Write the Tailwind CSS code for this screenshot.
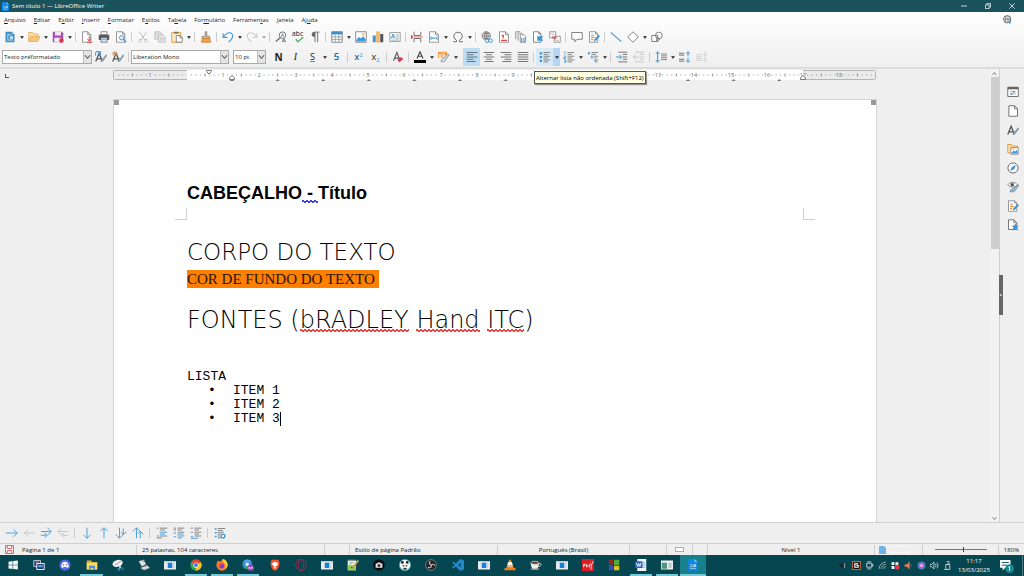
<!DOCTYPE html>
<html lang="pt-BR">
<head>
    <meta charset="UTF-8">
    <meta name="viewport" content="width=device-width, initial-scale=1.0">
    <title>Sem título 1 — LibreOffice Writer</title>
    <script src="https://cdn.jsdelivr.net/npm/@tailwindcss/browser@4"></script>
</head>
<body class="h-screen flex flex-col overflow-hidden bg-[#efefef] text-[#222] text-[6px] leading-[10px] font-['Segoe_UI','Open_Sans',sans-serif]">

    <!-- icon sprite -->
    <svg class="hidden">
        <defs>
            <!-- standard toolbar -->
            <symbol id="new" viewBox="0 0 16 16"><path d="M2 1h9l3 3v11H2z" fill="#3d8fc9"/><path d="M11 1v3h3z" fill="#bfe0f5"/><path d="M4 5h6M4 7.500h2M4 9.500h2M4 12h8" stroke="#fff"/><path d="M8 7h4v3.500H8z" fill="#cfe8f8"/></symbol>
            <symbol id="folder" viewBox="0 0 16 16"><path d="M1 14V2h5l1.500 2H13v3" fill="#fbe3b6" stroke="#e0a040"/><path d="M1 14 4 7h12l-3 7z" fill="#f7c77a" stroke="#e8a74b"/></symbol>
            <symbol id="save" viewBox="0 0 16 16"><path d="M1 1h12l2 2v12H1z" fill="#a04fb5"/><path d="M4 1h8v5H4zM3 9h9v6H3z" fill="#f3e3f7"/><circle cx="12.500" cy="12.500" r="3" fill="#e0364c"/></symbol>
            <symbol id="pdf" viewBox="0 0 16 16"><path d="M2 1h7l4 4v10H2z" fill="#fff" stroke="#777"/><path d="M9 1v4h4" fill="none" stroke="#777"/><path d="M11 7v6M8.500 10.500 11 13.500l2.500-3M8 15h7" fill="none" stroke="#e04545" stroke-width="1.300"/></symbol>
            <symbol id="print" viewBox="0 0 16 16"><path d="M4 1h8v4H4z" fill="#fff" stroke="#666"/><path d="M1 5h14v7H1z" fill="#5a5a5a"/><path d="M4 9h8v6H4z" fill="#d5eaf8" stroke="#666"/><path d="M6 11.500h4" stroke="#3d8fc9"/></symbol>
            <symbol id="preview" viewBox="0 0 16 16"><path d="M2 1h8l3 3v11H2z" fill="#fff" stroke="#777"/><path d="M10 1v3h3" fill="none" stroke="#777"/><circle cx="9" cy="9" r="3" fill="#e3f2fc" stroke="#3d95d6" stroke-width="1.300"/><path d="m11 11 4 4" stroke="#3d95d6" stroke-width="1.600"/></symbol>
            <symbol id="cut" viewBox="0 0 16 16"><path d="m3 1 7.500 11M13 1 5.500 12" stroke="#bbb" stroke-width="1.200" fill="none"/><circle cx="4" cy="13" r="2" fill="none" stroke="#bbb"/><circle cx="12" cy="13" r="2" fill="none" stroke="#bbb"/></symbol>
            <symbol id="copy" viewBox="0 0 16 16"><path d="M1 1h7l2 2v8H1z" fill="#ddd" stroke="#bbb"/><path d="M6 5h6l3 3v7H6z" fill="#e8e8e8" stroke="#b5b5b5"/><path d="M8 9.500h5M8 12h5" stroke="#bbb"/></symbol>
            <symbol id="paste" viewBox="0 0 16 16"><path d="M1 2h12v13H1z" fill="#fdebc8" stroke="#e0a040" stroke-width="1.300"/><path d="M4 1h6v2.500H4z" fill="#777"/><path d="M7 6h5l3 3v6H7z" fill="#fff" stroke="#666"/><path d="M12 6v3h3" fill="none" stroke="#666"/></symbol>
            <symbol id="clone" viewBox="0 0 16 16"><path d="M7 1h2v6h4v3H3V7h4z" fill="#e6b98a" stroke="#777"/><path d="M3 10h10l1 5H2z" fill="#f5a24a" stroke="#c97828"/></symbol>
            <symbol id="undo" viewBox="0 0 16 16"><path d="M1.500 3v5.500H7M1.500 8.500C5 2 11 1 13.500 4c2 3 0 8-5 10.500" fill="none" stroke="#3d95d6" stroke-width="1.400"/></symbol>
            <symbol id="redo" viewBox="0 0 16 16"><path d="M14.500 3v5.500H9M14.500 8.500C11 2 5 1 2.500 4c-2 3 0 8 5 10.500" fill="none" stroke="#ccc" stroke-width="1.400"/></symbol>
            <symbol id="find" viewBox="0 0 16 16"><circle cx="10" cy="5.500" r="4.300" fill="#fff" stroke="#666" stroke-width="1.200"/><path d="M7 9 1 14" stroke="#666" stroke-width="1.600"/><path d="m8 8 2-5 2 5M8.800 6h2.400" fill="none" stroke="#3d95d6"/><path d="m9.500 15 2.300-5 2.300 5M10.500 13.500h3" fill="none" stroke="#555"/></symbol>
            <symbol id="check" viewBox="0 0 16 8"><path d="m5 3 3 3.500L15 0" fill="none" stroke="#3fae5c" stroke-width="1.800"/></symbol>
            <symbol id="pilcrow" viewBox="0 0 16 16"><path d="M8 1.500h6M8 2v13M11.500 2v13" stroke="#666" stroke-width="1.200"/><path d="M8 1c-6 0-6 7 0 7z" fill="#666"/></symbol>
            <symbol id="table" viewBox="0 0 16 16"><path d="M1 1h14v14H1z" fill="#fff" stroke="#666"/><path d="M1 1h14v3.500H1z" fill="#3d8fc9"/><path d="M1 8h14M1 11.500h14M5.500 4v11M10.500 4v11" stroke="#7f8f9a"/></symbol>
            <symbol id="image" viewBox="0 0 16 16"><path d="M1 1h14v14H1z" fill="#fff" stroke="#666"/><path d="m2 12 3-4 3 2 3-3 3 4v3H2z" fill="#3d95d6"/><circle cx="11" cy="4.500" r="1.500" fill="#f0a848"/></symbol>
            <symbol id="chart" viewBox="0 0 16 16"><path d="M1 6h4v9H1z" fill="#3d95d6"/><path d="M6 1h4v14H6z" fill="#f3bb69" stroke="#dc9a3e" stroke-width=".5"/><path d="M11 4h4v11h-4z" fill="#555"/></symbol>
            <symbol id="textbox" viewBox="0 0 16 16"><path d="M1 2h14v12H1z" fill="#f5fafd" stroke="#888"/><path d="m3 10 2.500-6L8 10M4 8h3" fill="none" stroke="#3d95d6" stroke-width="1.200"/><path d="M9.500 5H13M9.500 7.500H13M9.500 10H13M3 12.200h10" stroke="#999"/></symbol>
            <symbol id="break" viewBox="0 0 16 16"><path d="M4 1v5h9V1M4 15v-5h9v5" fill="none" stroke="#666" stroke-width="1.200"/><path d="M4 8h12M0 5.500 3 8l-3 2.500z" fill="#e04545" stroke="#e04545"/></symbol>
            <symbol id="field" viewBox="0 0 16 16"><path d="M2 1h8l4 4v10H2z" fill="#fff" stroke="#777"/><path d="M10 1v4h4" fill="none" stroke="#777"/><path d="M4 9.500h8M4 7v5M12 7v5M6 9.500l1.500-1.500M6 9.500 7.500 11" fill="none" stroke="#3d95d6" stroke-width="1.200"/></symbol>
            <symbol id="omega" viewBox="0 0 16 16"><path d="M1.500 14.300H6v-2C0 9 2 1.700 8 1.700s8 7.300 2 10.600v2h4.500" fill="none" stroke="#666" stroke-width="1.300"/></symbol>
            <symbol id="link" viewBox="0 0 16 16"><circle cx="7" cy="6.500" r="5.500" fill="#fff" stroke="#666"/><path d="M1.500 6.500h11M7 1v11M3 3.500h8M3 9.500h8M7 1C3.500 4 3.500 9 7 12c3.500-3 3.500-8 0-11" fill="none" stroke="#666"/><circle cx="8" cy="13" r="2.300" fill="#fff" stroke="#3d95d6" stroke-width="1.300"/><circle cx="13" cy="13" r="2.300" fill="#fff" stroke="#3d95d6" stroke-width="1.300"/></symbol>
            <symbol id="footnote" viewBox="0 0 16 16"><path d="M2 1h8l4 4v10H2z" fill="#fff" stroke="#777"/><path d="M10 1v4h4" fill="none" stroke="#777"/><path d="M4 12.500h8M7 5v5M5 7l2-2" stroke="#e04545" stroke-width="1.500"/></symbol>
            <symbol id="endnote" viewBox="0 0 16 16"><path d="M1 11V1h6M4 13V3h6" fill="none" stroke="#777"/><path d="M7 5h5l2 2v8H7z" fill="#fff" stroke="#777"/><path d="M9 9v6M12 9v6" stroke="#3d95d6" stroke-width="1.500"/></symbol>
            <symbol id="bookmark" viewBox="0 0 16 16"><path d="M2 1h7l3 3v11H2z" fill="#fff" stroke="#666"/><path d="M9 1v3h3" fill="none" stroke="#666"/><path d="M7 7h8l-2 3 2 3H7z" fill="#3d95d6"/></symbol>
            <symbol id="xref" viewBox="0 0 16 16"><path d="M1 1h8v8H1zM7 7h8v8H7z" fill="#fff" stroke="#777"/><path d="M3 4h4M9 12.500h4" stroke="#999"/><path d="M5 6.500v3h4M8 7.500l2 2-2 2" fill="none" stroke="#e04545" stroke-width="1.200"/></symbol>
            <symbol id="comment" viewBox="0 0 16 16"><path d="M1 2h14v9H8l-3 3.500V11H1z" fill="#fff" stroke="#777" stroke-width="1.200"/></symbol>
            <symbol id="changes" viewBox="0 0 16 16"><path d="M2 1h8l3 3v11H2z" fill="#fff" stroke="#777"/><path d="M10 1v3h3" fill="none" stroke="#777"/><path d="M4 5.500h4" stroke="#777"/><path d="M4 8.500h5M4 11.500h3" stroke="#f0903c" stroke-width="1.500"/><path d="m8 14 .5-3L14 5l2 2-5.500 6z" fill="#3d95d6"/></symbol>
            <symbol id="line" viewBox="0 0 16 16"><path d="m1 2 14 12" stroke="#4aa3e0" stroke-width="1.500"/></symbol>
            <symbol id="diamond" viewBox="0 0 16 16"><path d="m8 1 7 7-7 7-7-7z" fill="#fff" stroke="#777" stroke-width="1.200"/></symbol>
            <symbol id="shapes" viewBox="0 0 16 16"><path d="M1 6h8v8H1z" fill="#fff" stroke="#777" stroke-width="1.200"/><circle cx="10.500" cy="6" r="4.500" fill="none" stroke="#777" stroke-width="1.200"/><path d="m8 8 4 3-5 3z" fill="none" stroke="#777"/></symbol>

            <!-- formatting toolbar -->
            <symbol id="style" viewBox="0 0 16 16"><path d="m1 14 4.500-11 4 10M3 10.500h5" fill="none" stroke="#555" stroke-width="1.700"/><path d="M8 14c0-3 2-4 3-4l4-5 1 1-4 5c0 2-2 3-4 3" fill="#8bc2e8" stroke="#555" stroke-width=".7"/></symbol>
            <symbol id="style-up" viewBox="0 0 16 16"><use href="#style"/><path d="M1 6a3.200 3.200 0 0 1 5-4l1-1v4H3.500" fill="none" stroke="#3d95d6" stroke-width="1.500"/></symbol>
            <symbol id="style-new" viewBox="0 0 16 16"><use href="#style"/><path d="M3.500 0v7M0 3.500h7M1 1l5 5M6 1 1 6" stroke="#f0903c" stroke-width="1.200"/></symbol>
            <symbol id="clear" viewBox="0 0 16 16"><path d="m2 13 4.500-11L11 13M3.500 9.500h6" fill="none" stroke="#555" stroke-width="1.400"/><path d="m7 12 5-4 3 2.500L10 15z" fill="#e0364c"/></symbol>
            <symbol id="fontcolor" viewBox="0 0 16 16"><path d="m4 10 4-9 4 9M5.500 7h5" fill="none" stroke="#444" stroke-width="1.500"/><path d="M0 12h16v4H0z" fill="#000"/></symbol>
            <symbol id="marker" viewBox="0 0 16 16"><path d="M0 1h12v8H0z" fill="#f6a04d"/><path d="M2 8V5h2v3H2M7 2v6h2V5H7" fill="none" stroke="#fff"/><path d="M4 14c0-3 3-4 4-4l5-6 2 1-5 7c0 2-3 3-6 2" fill="#d5eaf8" stroke="#666" stroke-width=".8"/></symbol>
            <symbol id="left" viewBox="0 0 16 16"><path d="M1 2h14M1 5h9M1 8h14M1 11h9M1 14h12" stroke="#5c6770" stroke-width="1.200"/></symbol>
            <symbol id="center" viewBox="0 0 16 16"><path d="M1 2h14M4 5h8M1 8h14M4 11h8M2 14h12" stroke="#666" stroke-width="1.200"/></symbol>
            <symbol id="right" viewBox="0 0 16 16"><path d="M1 2h14M6 5h9M1 8h14M6 11h9M3 14h12" stroke="#666" stroke-width="1.200"/></symbol>
            <symbol id="justify" viewBox="0 0 16 16"><path d="M1 2h14M1 5h14M1 8h14M1 11h14M1 14h14" stroke="#666" stroke-width="1.200"/></symbol>
            <symbol id="bullets" viewBox="0 0 16 16"><path d="M1 3h3M1 8h3M1 13h3" stroke="#3d95d6" stroke-width="3"/><path d="M6 2h9M6 4.500h6M6 7h9M6 9.500h6M6 12h9M6 14.500h6" stroke="#666"/></symbol>
            <symbol id="numbers" viewBox="0 0 16 16"><path d="M2.500 0v4.500M1 6.500h2.500v2H1v1.500h3M1 12h3v3H1M2 13.500h2" fill="none" stroke="#3d95d6"/><path d="M6 2h9M6 4.500h6M6 7h9M6 9.500h6M6 12h9M6 14.500h6" stroke="#666"/></symbol>
            <symbol id="outline" viewBox="0 0 16 16"><path d="M1 3h3M2.500 1v4M5 8h3M6.500 6v4M9 13h3" stroke="#3d95d6" stroke-width="1.300"/><path d="M6 2h9M6 4.500h6M9 7h6M9 9.500h4M11 12h4M11 14.500h3" stroke="#666"/></symbol>
            <symbol id="indent" viewBox="0 0 16 16"><path d="M3 1.500h12M9 4.500h6M9 8h6M9 11h6M3 14.500h12" stroke="#666" stroke-width="1.200"/><path d="M0 8h7M4.500 5 7.500 8l-3 3" fill="none" stroke="#3d95d6" stroke-width="1.300"/></symbol>
            <symbol id="outdent" viewBox="0 0 16 16"><path d="M3 1.500h12M9 4.500h6M9 8h6M9 11h6M3 14.500h12" stroke="#c4c4c4" stroke-width="1.200"/><path d="M1 8h7M3.500 5 .5 8l3 3" fill="none" stroke="#c4c4c4" stroke-width="1.300"/></symbol>
            <symbol id="spacing" viewBox="0 0 16 16"><path d="M3.500 1v14M1 4l2.500-3L6 4M1 12l2.500 3L6 12" fill="none" stroke="#3d95d6" stroke-width="1.300"/><path d="M8 4h8M8 6.500h8M8 9h8M8 11.500h8" stroke="#666"/></symbol>
            <symbol id="para-up" viewBox="0 0 16 16"><path d="M0 3h7M0 5.500h7M0 11h7M0 13.500h7" stroke="#666" stroke-width="1.200"/><path d="M12 7V1M9.500 3.500 12 1l2.500 2.500M12 9v6M9.500 12.500 12 15l2.500-2.500" fill="none" stroke="#3d95d6" stroke-width="1.300"/></symbol>
            <symbol id="para-down" viewBox="0 0 16 16"><path d="M0 5h8M0 7.500h8M0 10h8M0 12.500h8" stroke="#c8c8c8"/><path d="M12 1v6M9.500 4.500 12 7l2.500-2.500M12 15V9M9.500 11.500 12 9l2.500 2.500" fill="none" stroke="#c4c4c4"/></symbol>

            <!-- list toolbar -->
            <symbol id="arr-r" viewBox="0 0 16 16"><path d="M0 8h15M10 3l5 5-5 5" fill="none" stroke="#4a9fd8" stroke-width="1.300"/></symbol>
            <symbol id="arr-l" viewBox="0 0 16 16"><path d="M16 8H2M7 3 2 8l5 5" fill="none" stroke="#c4c4c4" stroke-width="1.300"/></symbol>
            <symbol id="arr-rr" viewBox="0 0 16 16"><path d="M1 6h13M10 1l5 5-5 5M1 11h7M6 7.500 9.500 11 6 14.500" fill="none" stroke="#4a9fd8" stroke-width="1.300"/></symbol>
            <symbol id="arr-ll" viewBox="0 0 16 16"><path d="M15 6H2M6 1 1 6l5 5M15 11H8M10 7.500 6.500 11l3.500 3.500" fill="none" stroke="#c4c4c4" stroke-width="1.300"/></symbol>
            <symbol id="arr-d" viewBox="0 0 16 16"><path d="M8 1v14M3.500 10.500 8 15l4.500-4.500" fill="none" stroke="#4a9fd8" stroke-width="1.300"/></symbol>
            <symbol id="arr-u" viewBox="0 0 16 16"><path d="M8 15V1M3.500 5.500 8 1l4.500 4.500" fill="none" stroke="#4a9fd8" stroke-width="1.300"/></symbol>
            <symbol id="arr-dd" viewBox="0 0 16 16"><path d="M6 1v14M1 10l5 5 5-5M11 2v8M8 7l3 3.500L15 6" fill="none" stroke="#4a9fd8" stroke-width="1.300"/></symbol>
            <symbol id="arr-uu" viewBox="0 0 16 16"><path d="M6 15V1M1 6l5-5 5 5M11 15V6M8 9l3-3.500L15 10" fill="none" stroke="#4a9fd8" stroke-width="1.300"/></symbol>
            <symbol id="list-a" viewBox="0 0 16 16"><path d="M1 1.500h2M5 1.500h10M5 4h7M1 12h3M5 12h10M1 14.500h7" stroke="#666"/><path d="M5 7h10M5 9.500h7" stroke="#4a9fd8" stroke-width="1.300"/></symbol>
            <symbol id="list-b" viewBox="0 0 16 16"><path d="M1 1.500h3M1 4h3M6 1.500h9M6 4h6M1 8h3M6 7h9" stroke="#666"/><path d="M6 9.500h8M6 12h9M6 14.500h6M1 13h3" stroke="#4a9fd8" stroke-width="1.300"/></symbol>
            <symbol id="list-c" viewBox="0 0 16 16"><path d="M1 1.500h3M6 1.500h9M6 4h6M1 7h3M6 7h9M6 9.500h6M6 12h9" stroke="#666"/><path d="M1 13h3M1 15h10" stroke="#4a9fd8" stroke-width="1.300"/></symbol>
            <symbol id="list-cfg" viewBox="0 0 16 16"><path d="M1 2.500h2.500M1 7.500h2.500M1 12.500h2.500" stroke="#3d95d6" stroke-width="2"/><path d="M5 2h10M5 4.500h7M5 7h8M5 9.500h4M5 12h3M5 14.500h4" stroke="#666"/><circle cx="12" cy="12" r="2.500" fill="#fff" stroke="#3d95d6" stroke-width="1.800"/></symbol>

            <!-- sidebar -->
            <symbol id="props" viewBox="0 0 16 16"><path d="M1 2h14v12H1z" fill="#fff" stroke="#666" stroke-width="1.200"/><path d="M1 1h14v3.500H1z" fill="#666"/><path d="M4 7.500h8M4 10.500h8" stroke="#999"/><path d="M9 6.500v2M6 9.500v2" stroke="#3d95d6" stroke-width="2.500"/></symbol>
            <symbol id="page" viewBox="0 0 16 16"><path d="M2.500 1h7.500l4 4v10H2.500z" fill="#fff" stroke="#666" stroke-width="1.200"/><path d="M10 1v4h4" fill="none" stroke="#666" stroke-width="1.200"/></symbol>
            <symbol id="gallery" viewBox="0 0 16 16"><path d="M1 13V2h5l1 2h7v3M1 13h5" fill="#fbe3b6" stroke="#ee9a3c" stroke-width="1.300"/><path d="M5 6h10v9H5z" fill="#fff" stroke="#777"/><path d="m6 13 3-3 2 1.500L13 9l1 2v3H6z" fill="#3d95d6"/><path d="M7 7.500h3v1.500H7z" fill="#f6a04d"/></symbol>
            <symbol id="compass" viewBox="0 0 16 16"><circle cx="8" cy="8" r="6.800" fill="#fff" stroke="#666" stroke-width="1.300"/><path d="M12 4 9.500 9.500 4 12l2.500-5.500z" fill="#3d95d6"/></symbol>
            <symbol id="inspect" viewBox="0 0 16 16"><path d="M1 5c3-4 10-4 13 0-3 4-10 4-13 0z" fill="#fff" stroke="#666"/><circle cx="7" cy="5" r="2.300" fill="#555"/><path d="M4 14c1-3 3-4 5-4l5-5 2 1-5 6c-1 3-4 3-7 2" fill="#8bc2e8" stroke="#666" stroke-width=".8"/></symbol>
            <symbol id="star-doc" viewBox="0 0 16 16"><path d="M2 1h7l4 4v9H2z" fill="#fff" stroke="#666" stroke-width="1.200"/><path d="M9 1v4h4" fill="none" stroke="#666"/><path d="m11 6 1.500 2.500 3 .5-2 2 1 4.500-3.500-2L7.500 15.500l1-4.500-2-2 3-.5z" fill="#3d95d6"/></symbol>

            <!-- apps -->
            <symbol id="writer" viewBox="0 0 16 16"><path d="M3 0h7l4 4v12H3a1.500 1.500 0 0 1-1.500-1.500v-13A1.500 1.500 0 0 1 3 0z" fill="#1187e0"/><path d="M10 0v4h4z" fill="#7cc6f7"/><path d="M4 7.500h3.500M4 10h3.500M4 12.500h8M9 7.500h2.500V10H9z" stroke="#b9defa" fill="#b9defa"/></symbol>
            <symbol id="win" viewBox="0 0 16 16"><path d="m2 3.500 5.500-.8v5H2zM8.200 2.600 14.500 2v5.700H8.200zM2 8.400h5.500v5L2 12.600zM8.200 8.400h6.300V14l-6.300-.7z" fill="#f3f8f9"/></symbol>
            <symbol id="tasks" viewBox="0 0 16 16"><path d="M1 2h9v8H1z" fill="#1a4a80" stroke="#e5e5ee"/><path d="M5 6h10v8H5z" fill="#203d78" stroke="#fff" stroke-width="1.200"/><path d="M7 8h6v3H7z" fill="#5c9ae2"/><path d="M3 4h5" stroke="#e06a8a" stroke-width="1.500"/></symbol>
            <symbol id="discord" viewBox="0 0 16 16"><circle cx="8" cy="8" r="7.500" fill="#5865f2"/><path d="M5 4.500c2-1 4-1 6 0 1.500 2 2 4 2 6-1 1-2 1-2.500 1l-.7-1H6.200l-.7 1c-.5 0-1.500 0-2.500-1 0-2 .5-4 2-6z" fill="#fff"/><circle cx="6" cy="8" r="1.100" fill="#5865f2"/><circle cx="10" cy="8" r="1.100" fill="#5865f2"/></symbol>
            <symbol id="explorer" viewBox="0 0 16 16"><path d="M1 2h6l1 2h7v10H1z" fill="#e8a92e"/><path d="M1 5h14v9H1z" fill="#fbd768"/><path d="M4 9h8v5h-2v-2.500H6V14H4z" fill="#3b8fd2"/></symbol>
            <symbol id="snip" viewBox="0 0 16 16"><ellipse cx="7.500" cy="6" rx="7" ry="4.500" fill="#eceff2" transform="rotate(-18 7 6)"/><path d="m4 8 8-5" stroke="#cc5c5c"/><path d="m8 8 5 5M12 8l-3 6" stroke="#d8e3ea" stroke-width="1.300"/><circle cx="9" cy="14" r="1.500" fill="none" stroke="#2f8ad0"/><circle cx="14" cy="13" r="1.500" fill="none" stroke="#2f8ad0"/></symbol>
            <symbol id="scan" viewBox="0 0 16 16"><path d="m1 3 7-2 3 6-6 3z" fill="#e1e3e4" stroke="#777" stroke-width=".6"/><path d="m3 12 9-4 4 4-8 3z" fill="#d5d9db" stroke="#555" stroke-width=".6"/><path d="M7 3c4 0 5 3 3 6" fill="none" stroke="#333"/></symbol>
            <symbol id="window" viewBox="0 0 16 16"><path d="M0 3h16v11H0z" fill="#e8ecef"/><path d="M0 3h16v1.500H0z" fill="#c7cfd5"/><path d="M5 5h6v7H5z" fill="#1780d8"/><path d="M13 5v7" stroke="#b6c0c8"/></symbol>
            <symbol id="chrome" viewBox="0 0 16 16"><circle cx="8" cy="8" r="7.500" fill="#35a655"/><path d="M8 8 1.500 4.200A7.500 7.500 0 0 1 14.500 4.200z" fill="#e5432f"/><path d="M8 8 14.500 4.300A7.500 7.500 0 0 1 8 15.500z" fill="#fbc116"/><circle cx="8" cy="8" r="3.500" fill="#fff"/><circle cx="8" cy="8" r="2.700" fill="#3b78e7"/></symbol>
            <symbol id="firefox" viewBox="0 0 16 16"><path d="M3 2c1 1 2 1.500 3 1.500C7 2 9 1 9 0c4 1 6.500 4 6.500 8a7.500 7.500 0 0 1-15 0c0-2.500 1-4.500 2.500-6z" fill="#ff7a2a"/><path d="M9 0c4 1 6.500 4 6.500 8-.5 3-2 4-3 5 1-5-1-8-3.500-9z" fill="#ffcf33"/><circle cx="7.500" cy="9" r="3.500" fill="#7a3fd6"/><path d="M3 6c2-1 4 0 5 1-1 2-3 1-3 3-2-1-2-2-2-4z" fill="#ff4f4f"/></symbol>
            <symbol id="chrome2" viewBox="0 0 16 16"><circle cx="7" cy="7" r="6.500" fill="#378ed6"/><path d="M1.500 4A6.500 6.500 0 0 1 13 4z" fill="#5aa2e8"/><path d="M2 11a6 6 0 0 0 6 2.500L7 9z" fill="#2eaa70"/><circle cx="7" cy="7" r="2.500" fill="#dceafa"/><circle cx="11.500" cy="11.500" r="4.300" fill="#9a3fbd"/><path d="M9.500 13.500v-3l2 2 2-2v3" fill="none" stroke="#fff"/></symbol>
            <symbol id="brave" viewBox="0 0 16 16"><path d="M4 1h8l2 2.500-.5 1.500.7 1.500L12 13l-4 3-4-3L1.800 6.500 2.500 5 2 3.500z" fill="#fb542b"/><path d="M5 4.500 8 4l3 .5L12 7l-2.500 2.500L8 10.500l-1.500-1L4 7zM6 11.500l2-1 2 1L8 13z" fill="#fff"/></symbol>
            <symbol id="opera" viewBox="0 0 16 16"><ellipse cx="8" cy="8" rx="7" ry="7.300" fill="none" stroke="#a8254d" stroke-width="1.200"/><ellipse cx="8" cy="8" rx="3.500" ry="6.500" fill="none" stroke="#a8254d"/></symbol>
            <symbol id="notepad" viewBox="0 0 16 16"><path d="M1 2h11v13H1z" fill="#f4f6ea"/><path d="M1 8h11v7H1z" fill="#8fcf4e"/><path d="M3 4.500h6M3 6.500h4M1 1.500h11" stroke="#8a9a8a"/><path d="m7 10 7-9 2 1.500-7 9z" fill="#d3a04b"/><path d="m5 11 3 1" stroke="#333"/></symbol>
            <symbol id="camera" viewBox="0 0 16 16"><circle cx="8" cy="8" r="7.700" fill="#0c0c10"/><path d="M3.500 6h2l1-1.500h3l1 1.500h2v5.500h-9z" fill="#e7e7e7"/><circle cx="8" cy="8.500" r="2" fill="#333"/></symbol>
            <symbol id="panda" viewBox="0 0 16 16"><circle cx="8" cy="8" r="7.500" fill="#f4f8f8" stroke="#38a7ac"/><circle cx="4.500" cy="4.500" r="1.800" fill="#222"/><circle cx="11" cy="4.500" r="1.800" fill="#222"/><path d="M5 8h2v2H5zM9 8h2v2H9zM5 13c1-2 5-2 6 0l-3 2z" fill="#444"/></symbol>
            <symbol id="obs" viewBox="0 0 16 16"><circle cx="8" cy="8" r="7.200" fill="#252525" stroke="#aaa" stroke-width=".8"/><path d="M7 3c-2 2-1 5 1.500 5M13 9c-1-2.500-4-3-5 0M4 11c2.500 1.500 5 0 4.500-3" fill="none" stroke="#ccc" stroke-width="1.500"/></symbol>
            <symbol id="vscode" viewBox="0 0 16 16"><path d="m11 0 5 2v12l-5 2-6-6-3 2.500L0 11l4-3-4-3 2-1.500L5 6zM11.500 5 8 8l3.500 3z" fill="#2489ca" fill-rule="evenodd"/></symbol>
            <symbol id="vlc" viewBox="0 0 16 16"><path d="M7 1h2l4 11H3z" fill="#f08a1d"/><path d="m6 4.500-1 3h6l-1-3zM4.500 9.500h7" fill="#fff" stroke="#fff"/><path d="M1 12h14l.7 3H.3z" fill="#e98118"/></symbol>
            <symbol id="cup" viewBox="0 0 16 16"><path d="M1 5h11c0 6-2 7-3 8H4c-1-1-3-2-3-8z" fill="#efeeeb"/><ellipse cx="6.500" cy="5" rx="5.500" ry="2" fill="#5b3a25" stroke="#ddd"/><path d="M12 6c4-1 4 4-1 4M1 13.500h11" fill="none" stroke="#d9d9d4" stroke-width="1.200"/></symbol>
            <symbol id="acrobat" viewBox="0 0 16 16"><path d="M0 0h16v16H0z" fill="#dc1f26"/><path d="M2 11V7h2v2H2M6 7v4M6 7l2 2v2M10 11V7h2M12 14c0-5 1-8 3-11" fill="none" stroke="#fff"/></symbol>
            <symbol id="blocks" viewBox="0 0 16 16"><path d="M1 1h6v6H1z" fill="#9c2525"/><path d="M8 1h7v7H8z" fill="#52a83b"/><path d="M1 8h6v7H1z" fill="#344fb5"/><path d="M8 9h7v6H8z" fill="#e0c322"/></symbol>
            <symbol id="word" viewBox="0 0 16 16"><path d="M3 0h12v16H3z" fill="#f1f5fb"/><path d="M10 5h4M10 8h4M10 11h4" stroke="#6b9bd8"/><path d="M0 3h10v9H0z" fill="#2b5fb8"/><path d="m2 5 1.500 5L5 6l1.500 4L8 5" fill="none" stroke="#fff" stroke-width="1.200"/></symbol>
            <symbol id="app" viewBox="0 0 16 16"><path d="M0 2h16v12H0z" fill="#eceeef"/><path d="M1 5h7v8H1z" fill="#4e947e"/><path d="M10 5h4v7h-4z" fill="#bcc5c8"/></symbol>

            <symbol id="dd" viewBox="0 0 6 4"><path d="M0 0h6L3 4z" fill="#222"/></symbol>
            <symbol id="chev" viewBox="0 0 8 8"><path d="m1 2 3 3.500L7 2" fill="none" stroke="#555" stroke-width="1.200"/></symbol>
        </defs>
    </svg>

    <!-- title bar -->
    <header class="h-3 shrink-0 flex items-center bg-[#1b535c] text-white pl-px">
        <svg class="size-[9px]"><use href="#writer"/></svg>
        <h1 class="pl-0.5 grow">Sem título 1 — LibreOffice Writer</h1>
        <div class="flex [&_button]:w-6 [&_button]:flex [&_button]:justify-center [&_svg]:size-[6px]">
            <button aria-label="Minimizar"><svg viewBox="0 0 8 8"><path d="M0 4h8" stroke="#fff"/></svg></button>
            <button aria-label="Restaurar"><svg viewBox="0 0 8 8"><path d="M.5 2.500h5v5h-5zM2.500 2V.5h5v5H6" fill="none" stroke="#fff"/></svg></button>
            <button aria-label="Fechar"><svg viewBox="0 0 8 8"><path d="m.5.5 7 7m0-7-7 7" stroke="#fff"/></svg></button>
        </div>
    </header>

    <div class="shrink-0 bg-linear-to-b from-white to-[#efefef] border-b-2 border-[#dcdcdc]">
        <nav class="h-[15px] flex items-center gap-2 pl-1 pr-3 [&_u]:underline-offset-1">
            <a href="#"><u>A</u>rquivo</a>
            <a href="#"><u>E</u>ditar</a>
            <a href="#">E<u>x</u>ibir</a>
            <a href="#"><u>I</u>nserir</a>
            <a href="#"><u>F</u>ormatar</a>
            <a href="#">E<u>s</u>tilos</a>
            <a href="#">Ta<u>b</u>ela</a>
            <a href="#">For<u>m</u>ulário</a>
            <a href="#">Ferramen<u>t</u>as</a>
            <a href="#"><u>J</u>anela</a>
            <a href="#">Aj<u>u</u>da</a>
            <button aria-label="Atualizações" class="ml-auto"><svg class="size-[9px]" viewBox="0 0 16 16"><circle cx="7.500" cy="7.500" r="6.500" fill="#fff" stroke="#555" stroke-width="1.500"/><path d="M1 7.500h13M7.500 1v13M4.500 2v11M10.500 2v11" stroke="#555"/><path d="M12 9v6M9.500 12.500 12 15l2.500-2.500" fill="none" stroke="#3d95d6" stroke-width="1.500"/></svg></button>
        </nav>

        <!-- standard toolbar -->
        <div role="toolbar" class="h-5 flex items-center pl-px [&_button]:w-[17px] [&_button]:h-4 [&_button]:flex [&_button]:items-center [&_button]:justify-center [&_svg]:size-3 [&_button.dd]:w-[7px] [&_.dd_svg]:w-1 [&_.dd_svg]:h-[3px] [&_hr]:h-2.5 [&_hr]:w-px [&_hr]:mx-0.5 [&_hr]:border-0 [&_hr]:bg-[#ccc]">
            <button aria-label="Novo"><svg><use href="#new"/></svg></button>
            <button class="dd" aria-label="Novo, opções"><svg><use href="#dd"/></svg></button>
            <button aria-label="Abrir"><svg><use href="#folder"/></svg></button>
            <button class="dd" aria-label="Abrir, opções"><svg><use href="#dd"/></svg></button>
            <button aria-label="Salvar"><svg><use href="#save"/></svg></button>
            <button class="dd" aria-label="Salvar, opções"><svg><use href="#dd"/></svg></button>
            <hr>
            <button aria-label="Exportar PDF"><svg><use href="#pdf"/></svg></button>
            <button aria-label="Imprimir"><svg><use href="#print"/></svg></button>
            <button aria-label="Visualizar impressão"><svg><use href="#preview"/></svg></button>
            <hr>
            <button aria-label="Cortar"><svg><use href="#cut"/></svg></button>
            <button aria-label="Copiar"><svg><use href="#copy"/></svg></button>
            <button aria-label="Colar"><svg><use href="#paste"/></svg></button>
            <button class="dd" aria-label="Colar, opções"><svg><use href="#dd"/></svg></button>
            <hr>
            <button aria-label="Clonar formatação"><svg><use href="#clone"/></svg></button>
            <hr>
            <button aria-label="Desfazer"><svg><use href="#undo"/></svg></button>
            <button class="dd" aria-label="Desfazer, opções"><svg><use href="#dd"/></svg></button>
            <button aria-label="Refazer"><svg><use href="#redo"/></svg></button>
            <button class="dd opacity-40" aria-label="Refazer, opções"><svg><use href="#dd"/></svg></button>
            <hr>
            <button aria-label="Localizar e substituir"><svg><use href="#find"/></svg></button>
            <button class="flex-col text-[7px] leading-[6px]"><span>abc</span><svg class="h-1.5!"><use href="#check"/></svg></button>
            <button aria-label="Marcas de formatação"><svg><use href="#pilcrow"/></svg></button>
            <hr>
            <button aria-label="Tabela"><svg><use href="#table"/></svg></button>
            <button class="dd" aria-label="Tabela, opções"><svg><use href="#dd"/></svg></button>
            <button aria-label="Imagem"><svg><use href="#image"/></svg></button>
            <button aria-label="Gráfico"><svg><use href="#chart"/></svg></button>
            <button aria-label="Caixa de texto"><svg><use href="#textbox"/></svg></button>
            <hr>
            <button aria-label="Quebra de página"><svg><use href="#break"/></svg></button>
            <button aria-label="Campo"><svg><use href="#field"/></svg></button>
            <button class="dd" aria-label="Campo, opções"><svg><use href="#dd"/></svg></button>
            <button aria-label="Caractere especial"><svg><use href="#omega"/></svg></button>
            <button class="dd" aria-label="Caractere especial, opções"><svg><use href="#dd"/></svg></button>
            <hr>
            <button aria-label="Hiperlink"><svg><use href="#link"/></svg></button>
            <button aria-label="Nota de rodapé"><svg><use href="#footnote"/></svg></button>
            <button aria-label="Nota de fim"><svg><use href="#endnote"/></svg></button>
            <button aria-label="Marcador"><svg><use href="#bookmark"/></svg></button>
            <button aria-label="Referência cruzada"><svg><use href="#xref"/></svg></button>
            <hr>
            <button aria-label="Anotação"><svg><use href="#comment"/></svg></button>
            <button aria-label="Registrar alterações"><svg><use href="#changes"/></svg></button>
            <hr>
            <button aria-label="Linha"><svg><use href="#line"/></svg></button>
            <button aria-label="Formas"><svg><use href="#diamond"/></svg></button>
            <button class="dd" aria-label="Formas, opções"><svg><use href="#dd"/></svg></button>
            <button aria-label="Funções de desenho"><svg><use href="#shapes"/></svg></button>
        </div>

        <!-- formatting toolbar -->
        <div role="toolbar" class="h-5 flex items-center pl-0.5 [&_button]:w-[17px] [&_button]:h-[18px] [&_button]:flex [&_button]:items-center [&_button]:justify-center [&_svg]:size-3 [&_button.dd]:w-[7px] [&_.dd_svg]:w-1 [&_.dd_svg]:h-[3px] [&_hr]:h-2.5 [&_hr]:w-px [&_hr]:mx-0.5 [&_hr]:border-0 [&_hr]:bg-[#ccc] [&_label]:h-3.5 [&_label]:flex [&_label]:items-stretch [&_label]:bg-white [&_label]:border [&_label]:border-[#aaa] [&_select]:appearance-none [&_select]:grow [&_select]:min-w-0 [&_select]:pl-px [&_label_span]:w-2 [&_label_span]:flex [&_label_span]:items-center [&_label_span]:bg-[#e4e4e4] [&_label_span]:border-l [&_label_span]:border-[#bbb]">
            <label class="w-[90px]"><select aria-label="Estilo de parágrafo"><option>Texto préformatado</option></select><span><svg><use href="#chev"/></svg></span></label>
            <button aria-label="Atualizar estilo"><svg><use href="#style-up"/></svg></button>
            <button aria-label="Novo estilo"><svg><use href="#style-new"/></svg></button>
            <hr>
            <label class="w-[98px]"><select aria-label="Nome da fonte"><option>Liberation Mono</option></select><span><svg><use href="#chev"/></svg></span></label>
            <label class="w-[33px] mx-1"><select aria-label="Tamanho da fonte"><option>10 pt</option></select><span><svg><use href="#chev"/></svg></span></label>
            <button class="text-[10px] font-bold">N</button>
            <button class="text-[10px] italic font-['Liberation_Serif',serif]">I</button>
            <button class="text-[9px]"><span class="border-b border-[#3d95d6] leading-[9px]">S</span></button>
            <button class="dd" aria-label="Sublinhado, opções"><svg><use href="#dd"/></svg></button>
            <button class="text-[9px] line-through decoration-[#3d95d6]">S</button>
            <hr>
            <button class="text-[9px]"><span>x<sup class="text-[6px] text-[#3d95d6]">2</sup></span></button>
            <button class="text-[9px]"><span>x<sub class="text-[6px] text-[#3d95d6]">2</sub></span></button>
            <hr>
            <button aria-label="Limpar formatação"><svg><use href="#clear"/></svg></button>
            <hr>
            <button aria-label="Cor da fonte"><svg><use href="#fontcolor"/></svg></button>
            <button class="dd" aria-label="Cor da fonte, opções"><svg><use href="#dd"/></svg></button>
            <button aria-label="Realce"><svg><use href="#marker"/></svg></button>
            <button class="dd mr-1" aria-label="Realce, opções"><svg><use href="#dd"/></svg></button>
            <button class="bg-[#bcdcf4]" aria-label="Alinhar à esquerda"><svg><use href="#left"/></svg></button>
            <button aria-label="Centralizar"><svg><use href="#center"/></svg></button>
            <button aria-label="Alinhar à direita"><svg><use href="#right"/></svg></button>
            <button aria-label="Justificar"><svg><use href="#justify"/></svg></button>
            <hr>
            <div class="relative flex">
                <button class="bg-[#d9eaf7]" aria-label="Lista não ordenada"><svg><use href="#bullets"/></svg></button>
                <button class="dd bg-[#b5d7f1]" aria-label="Lista não ordenada, opções"><svg><use href="#dd"/></svg></button>
                <div role="tooltip" class="absolute z-10 top-[23px] -left-0.5 h-[13px] px-px flex items-center whitespace-nowrap bg-[#ffffe1] border border-[#555] shadow-[1px_1px_1px_#0006] text-black">Alternar lista não ordenada (Shift+F12)</div>
            </div>
            <button aria-label="Lista ordenada"><svg><use href="#numbers"/></svg></button>
            <button class="dd" aria-label="Lista ordenada, opções"><svg><use href="#dd"/></svg></button>
            <button aria-label="Estrutura de tópicos"><svg><use href="#outline"/></svg></button>
            <button class="dd" aria-label="Estrutura de tópicos, opções"><svg><use href="#dd"/></svg></button>
            <hr>
            <button aria-label="Aumentar recuo"><svg><use href="#indent"/></svg></button>
            <button aria-label="Diminuir recuo"><svg><use href="#outdent"/></svg></button>
            <hr>
            <button aria-label="Entrelinhas"><svg><use href="#spacing"/></svg></button>
            <button class="dd" aria-label="Entrelinhas, opções"><svg><use href="#dd"/></svg></button>
            <button aria-label="Aumentar espaçamento"><svg><use href="#para-up"/></svg></button>
            <button aria-label="Diminuir espaçamento"><svg><use href="#para-down"/></svg></button>
        </div>
    </div>

    <div class="grow min-h-0 flex">
        <main class="grow min-w-0 flex flex-col">
            <!-- ruler, 36.25 units per centimetre -->
            <div class="flex pt-px">
                <svg class="w-2 h-3 ml-1 -mr-3 shrink-0" viewBox="0 0 8 12"><path d="M1.500 4v3.500H5" fill="none" stroke="#555"/></svg>
                <svg class="w-[764px] h-3 mx-auto" viewBox="0 0 764 12" font-size="5.500" text-anchor="middle" fill="#666">
                    <defs>
                        <pattern id="cm" x="74" width="36.250" height="10" patternUnits="userSpaceOnUse">
                            <path d="M4.500 4.500v1M9 4.500v1M13.500 4.500v1M18 3.500v3M22.600 4.500v1M27.200 4.500v1M31.700 4.500v1" stroke="#888"/>
                        </pattern>
                        <pattern id="tab" x="96" width="45.600" height="12" patternUnits="userSpaceOnUse">
                            <path d="m21 11 2-2 2 2z" fill="#666"/>
                        </pattern>
                    </defs>
                    <rect x=".5" y=".5" width="762" height="9" rx="1" fill="#ebebeb" stroke="#b5b5b5"/>
                    <rect x="74" width="616" height="10" fill="#fff"/>
                    <rect x="4" width="755" height="10" fill="url(#cm)"/>
                    <rect x="96" width="590" height="12" fill="url(#tab)"/>
                    <text x="37" y="7">1</text><text x="110" y="7">1</text><text x="146" y="7">2</text><text x="183" y="7">3</text><text x="219" y="7">4</text><text x="255" y="7">5</text><text x="291" y="7">6</text><text x="328" y="7">7</text><text x="364" y="7">8</text><text x="400" y="7">9</text><text x="545" y="7">13</text><text x="581" y="7">14</text><text x="618" y="7">15</text><text x="654" y="7">16</text><text x="690" y="7">17</text><text x="726" y="7">18</text>
                    <path d="M93.500.500h5v1L96 4l-2.500-2.500zM116.500 9.500V8l2.500-2.500L121.500 8v1.500zM687.500 9.500V8l2.500-2.500 2.500 2.500v1.500z" fill="#fff" stroke="#777"/>
                </svg>
            </div>

            <!-- page -->
            <article class="w-[764px] mx-auto mt-[17px] grow min-h-0 overflow-hidden bg-white border-x border-t border-[#d6d6d6] text-black">
                <div class="flex justify-between"><i class="size-[5px] bg-[#999]"></i><i class="size-[5px] bg-[#999]"></i></div>
                <div class="px-[73px] pt-[78px]">
                    <h2 class="text-lg leading-5 font-bold font-['Liberation_Sans',Arial,sans-serif]">CABEÇALHO<span class="bg-[radial-gradient(circle_at_1px_1px,#4040f0_1px,transparent_1px),radial-gradient(circle_at_3px_2px,#4040f0_1px,transparent_1px)] bg-size-[4px_3px] bg-bottom-left bg-repeat-x"> - </span>Título</h2>
                    <div class="flex justify-between -mx-3 mt-[5px]">
                        <i class="size-3 border-r border-b border-[#d0d0d0]"></i>
                        <i class="size-3 border-l border-b border-[#d0d0d0]"></i>
                    </div>
                    <p class="mt-5 text-[23px] leading-6 font-extralight font-['Bradley_Hand_ITC','DejaVu_Sans_Light','DejaVu_Sans',sans-serif]">CORPO DO TEXTO</p>
                    <p class="mt-1.5 text-[15px] leading-[18px] font-['Liberation_Serif',serif]"><span class="inline-block pr-1 bg-[#ff8000] text-[#2a1500]">COR DE FUNDO DO TEXTO</span></p>
                    <p class="mt-5 text-[24px] leading-6 font-extralight font-['Bradley_Hand_ITC','DejaVu_Sans_Light','DejaVu_Sans',sans-serif] [&_span]:inline-block [&_span]:bg-[radial-gradient(circle_at_1px_1px,#f04040_1px,transparent_1px),radial-gradient(circle_at_3px_2px,#f04040_1px,transparent_1px)] [&_span]:bg-size-[4px_3px] [&_span]:bg-bottom-left [&_span]:bg-repeat-x">FONTES (<span>bRADLEY</span> <span>Hand</span> <span>ITC</span>)</p>
                    <div class="mt-[38px] text-[13px] leading-[14px] font-['Liberation_Mono',monospace]">
                        <p>LISTA</p>
                        <ul class="[&_li]:flex [&_li]:before:content-['•'] [&_li]:before:w-[25px] [&_li]:before:shrink-0 pl-[21px]">
                            <li>ITEM 1</li>
                            <li>ITEM 2</li>
                            <li><span class="border-r border-black">ITEM 3</span></li>
                        </ul>
                    </div>
                </div>
            </article>
        </main>

        <!-- vertical scrollbar -->
        <div class="w-[9px] shrink-0 flex flex-col items-center bg-[#f2f2f2]">
            <button aria-label="Rolar para cima" class="h-2 flex items-center"><svg class="size-[5px] rotate-180"><use href="#chev"/></svg></button>
            <div class="h-[38%] w-2 bg-[#cdcdcd]"></div>
            <button aria-label="Rolar para baixo" class="mt-auto h-2 flex items-center"><svg class="size-[5px]"><use href="#chev"/></svg></button>
        </div>

        <!-- sidebar -->
        <aside class="relative w-[25px] shrink-0 border-l border-[#cfcfcf] pt-[17px] pl-px flex flex-col items-center gap-[7px] [&_svg]:size-3">
            <button aria-label="Propriedades"><svg><use href="#props"/></svg></button>
            <button aria-label="Página"><svg><use href="#page"/></svg></button>
            <button aria-label="Estilos"><svg><use href="#style"/></svg></button>
            <button aria-label="Galeria"><svg><use href="#gallery"/></svg></button>
            <button aria-label="Navegador"><svg><use href="#compass"/></svg></button>
            <button aria-label="Inspetor de estilos"><svg><use href="#inspect"/></svg></button>
            <button aria-label="Gerenciar alterações"><svg><use href="#changes"/></svg></button>
            <button aria-label="Acessibilidade"><svg><use href="#star-doc"/></svg></button>
            <button aria-label="Ocultar barra lateral" class="absolute -left-px top-[206px] w-1 h-10 flex items-center justify-center bg-[#666] text-white text-[4px]">▸</button>
        </aside>
    </div>

    <!-- bullets and numbering toolbar -->
    <div role="toolbar" class="h-[21px] shrink-0 flex items-center border-t border-[#cfcfcf] pl-[3px] [&_button]:w-[17px] [&_button]:flex [&_button]:justify-center [&_svg]:size-3 [&_hr]:h-2.5 [&_hr]:w-px [&_hr]:mx-[3px] [&_hr]:border-0 [&_hr]:bg-[#ccc]">
        <button aria-label="Rebaixar"><svg><use href="#arr-r"/></svg></button>
        <button aria-label="Promover"><svg><use href="#arr-l"/></svg></button>
        <button aria-label="Rebaixar com subitens"><svg><use href="#arr-rr"/></svg></button>
        <button aria-label="Promover com subitens"><svg><use href="#arr-ll"/></svg></button>
        <hr>
        <button aria-label="Mover para baixo"><svg><use href="#arr-d"/></svg></button>
        <button aria-label="Mover para cima"><svg><use href="#arr-u"/></svg></button>
        <button aria-label="Mover para baixo com subitens"><svg><use href="#arr-dd"/></svg></button>
        <button aria-label="Mover para cima com subitens"><svg><use href="#arr-uu"/></svg></button>
        <hr>
        <button aria-label="Inserir item sem número"><svg><use href="#list-a"/></svg></button>
        <button aria-label="Reiniciar numeração"><svg><use href="#list-b"/></svg></button>
        <button aria-label="Adicionar à lista"><svg><use href="#list-c"/></svg></button>
        <hr>
        <button aria-label="Formatar lista"><svg><use href="#list-cfg"/></svg></button>
    </div>

    <!-- status bar -->
    <footer class="h-3 shrink-0 grid grid-cols-[17fr_120fr_188fr_25fr_148fr_132fr_37fr_26fr_15fr_167fr_48fr_76fr_25fr] items-center border-t border-[#cfcfcf] whitespace-nowrap [&>*]:border-r [&>*]:border-[#cfcfcf] [&>*]:h-2.5 [&>*]:min-w-0">
        <span class="pl-[5px] border-0!"><svg class="size-[9px]" viewBox="0 0 16 16"><path d="M1 1h14v14H1z" fill="#fff" stroke="#e04545" stroke-width="1.500"/><path d="M4 1v5h8V1M4 15v-5h8v5" fill="none" stroke="#e04545" stroke-width="1.500"/></svg></span>
        <span class="pl-[5px]">Página 1 de 1</span>
        <span class="pl-[5px]">25 palavras, 104 caracteres</span>
        <span></span>
        <span class="pl-[5px]">Estilo de página Padrão</span>
        <span class="text-center">Português (Brasil)</span>
        <span></span>
        <span class="flex items-center justify-center"><i class="w-[9px] h-[5px] bg-white border border-[#7db8e4]"></i></span>
        <span></span>
        <span class="text-center">Nível 1</span>
        <span class="flex items-center gap-1 pl-1"><svg class="w-[7px] h-2" viewBox="0 0 7 8"><path d="M0 0h5l2 2v6H0z" fill="#6fb3e6"/></svg><i class="w-5 h-[7px] border border-[#f8f8f8]"></i></span>
        <label class="flex items-center justify-center"><input type="range" aria-label="Zoom" value="56" class="appearance-none w-[52px] h-px bg-[#777] [&::-webkit-slider-thumb]:appearance-none [&::-webkit-slider-thumb]:w-px [&::-webkit-slider-thumb]:h-[5px] [&::-webkit-slider-thumb]:bg-[#444]"></label>
        <span class="text-center border-0!">180%</span>
    </footer>

    <!-- taskbar -->
    <div class="h-[21px] shrink-0 flex items-stretch bg-[#064650] text-white">
        <div class="w-[706px] shrink-0 grid grid-cols-[repeat(27,1fr)] [&_button]:flex [&_button]:items-center [&_button]:justify-center [&_button]:border-b-2 [&_button]:border-transparent [&_button.on]:border-[#76c9d6] [&_button]:mx-0.5 [&_svg]:size-3">
            <button aria-label="Iniciar"><svg><use href="#win"/></svg></button>
            <button aria-label="Visão de tarefas"><svg><use href="#tasks"/></svg></button>
            <button aria-label="Discord"><svg><use href="#discord"/></svg></button>
            <button class="on" aria-label="Explorador"><svg><use href="#explorer"/></svg></button>
            <button aria-label="Captura"><svg><use href="#snip"/></svg></button>
            <button aria-label="Scanner"><svg><use href="#scan"/></svg></button>
            <button aria-label="Aplicativo 1"><svg><use href="#window"/></svg></button>
            <button class="on" aria-label="Chrome"><svg><use href="#chrome"/></svg></button>
            <button class="on" aria-label="Firefox"><svg><use href="#firefox"/></svg></button>
            <button class="on" aria-label="Chrome, perfil M"><svg><use href="#chrome2"/></svg></button>
            <button aria-label="Brave"><svg><use href="#brave"/></svg></button>
            <button aria-label="Opera"><svg><use href="#opera"/></svg></button>
            <button aria-label="Aplicativo 2"><svg><use href="#window"/></svg></button>
            <button aria-label="Notepad++"><svg><use href="#notepad"/></svg></button>
            <button aria-label="Câmera"><svg><use href="#camera"/></svg></button>
            <button aria-label="Panda"><svg><use href="#panda"/></svg></button>
            <button aria-label="OBS"><svg><use href="#obs"/></svg></button>
            <button aria-label="VS Code"><svg><use href="#vscode"/></svg></button>
            <button aria-label="Aplicativo 3"><svg><use href="#window"/></svg></button>
            <button aria-label="VLC"><svg><use href="#vlc"/></svg></button>
            <button aria-label="Java"><svg><use href="#cup"/></svg></button>
            <button aria-label="Aplicativo 4"><svg><use href="#window"/></svg></button>
            <button aria-label="PDF"><svg><use href="#acrobat"/></svg></button>
            <button aria-label="Blocos"><svg><use href="#blocks"/></svg></button>
            <button class="on" aria-label="Word"><svg><use href="#word"/></svg></button>
            <button class="on" aria-label="Aplicativo 5"><svg><use href="#app"/></svg></button>
            <button class="on bg-[#187f8c] mx-0!" aria-label="Writer"><svg><use href="#writer"/></svg></button>
        </div>
        <div class="ml-auto flex items-center gap-1 border-r border-[#4d7c84] mr-px [&_svg]:size-[9px]">
            <svg viewBox="0 0 16 16"><path d="m1 8 4-3v6zM5 8h9" fill="#222" stroke="#222" stroke-width="2"/><path d="M10 4v8" stroke="#999" stroke-width="2"/></svg>
            <svg viewBox="0 0 16 16"><path d="M1 1h14v14H1z" fill="#111" stroke="#b46a48" stroke-width="2"/><path d="M11 5H5v6h6V8H8" fill="none" stroke="#fff" stroke-width="2"/></svg>
            <svg viewBox="0 0 16 16"><path d="M3 4h9v7H3zM12 6h2v3h-2M4 1.500h7M4 14h7" fill="none" stroke="#ddd" stroke-width="1.500"/></svg>
            <svg viewBox="0 0 16 16"><path d="M2 14A12 12 0 0 1 14 2M6 14a8 8 0 0 1 8-8M10 14a4 4 0 0 1 4-4" fill="none" stroke="#bbb" stroke-width="1.500"/></svg>
            <svg viewBox="0 0 16 16"><path d="M1 2h5v5H1zM8 2h5v5H8zM1 9h5v5H1z" fill="#fff"/><circle cx="11" cy="11" r="4.500" fill="#e0364c"/></svg>
            <svg viewBox="0 0 16 16"><path d="M1 6h4l5-5v14l-5-5H1z" fill="#ec7a4d"/><path d="M13 5v6" stroke="#a03030" stroke-width="2"/></svg>
            <svg viewBox="0 0 16 16"><circle cx="8" cy="8" r="7" fill="#5579c8"/><circle cx="8" cy="8" r="3.500" fill="#d77fc0"/><circle cx="8" cy="8" r="1.500" fill="#fff"/></svg>
            <svg viewBox="0 0 16 16"><path d="M0 6h3l4-4v12l-4-4H0zM9.500 5c1.500 2 1.500 4 0 6M12 3c3 3 3 7 0 10" fill="none" stroke="#eee" stroke-width="1.300"/></svg>
            <svg viewBox="0 0 16 16"><path d="M5 6h7v9H5zM6.500 1h4v5h-4M2 15h3" fill="none" stroke="#ddd" stroke-width="1.500"/></svg>
            <time class="flex flex-col items-center justify-center leading-[9px] w-9"><span>11:17</span><span>13/03/2025</span></time>
            <button aria-label="Notificações" class="ml-1 mr-2"><svg class="size-3.5!" viewBox="0 0 16 16"><path d="M0 1h12v9H6l-3 3v-3H0z" fill="#fff"/><path d="M2 4h8M2 7h6" stroke="#064650"/><circle cx="11" cy="11" r="5" fill="#1b8590"/><path d="M9.500 9.500 11 8.500v5" fill="none" stroke="#fff"/></svg></button>
        </div>
    </div>
</body>
</html>
